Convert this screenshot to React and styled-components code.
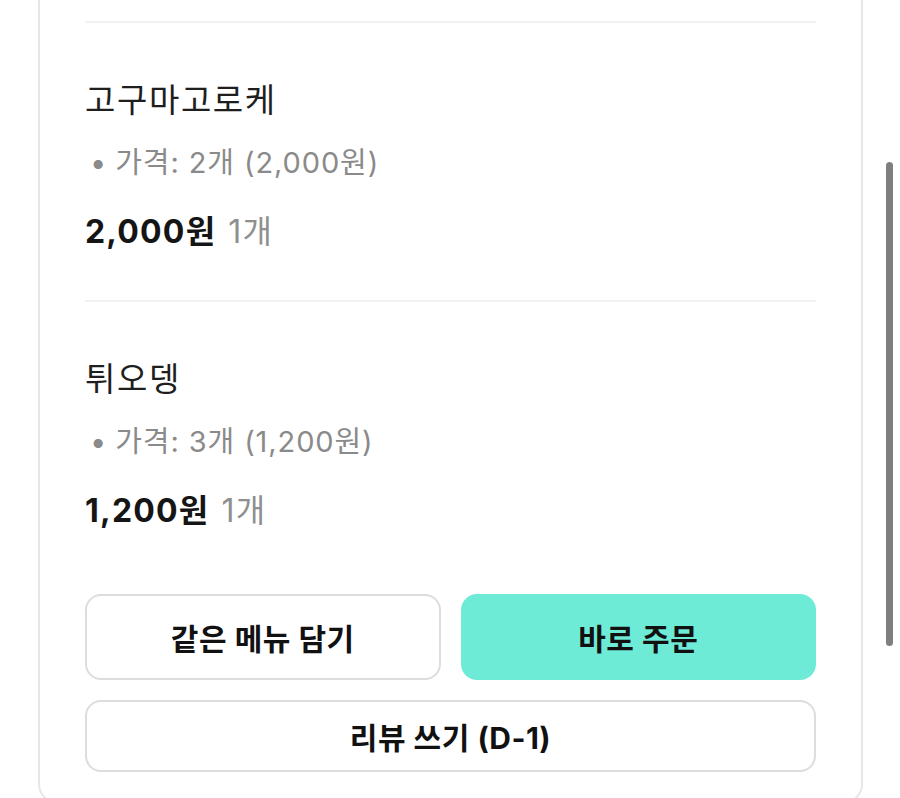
import React from "react";
import styled, { createGlobalStyle } from "styled-components";

const GlobalStyle = createGlobalStyle`
  html, body {
    margin: 0;
    padding: 0;
    height: 100%;
    overflow: hidden;
    background: #ffffff;
  }
  body {
    font-family: "Inter", "Noto Sans CJK KR", sans-serif;
    color: #1a1a1a;
  }
`;

const items = [
  { name: "고구마고로케", option: "가격: 2개 (2,000원)", total: "2,000원", count: "1개" },
  { name: "튀오뎅", option: "가격: 3개 (1,200원)", total: "1,200원", count: "1개" },
];

const App = function () {
  return (
    <>
      <GlobalStyle />
      <Page>
        <Card>
          {items.map((item) => (
            <Item key={item.name}>
              <Name>{item.name}</Name>
              <Option>{item.option}</Option>
              <Total>
                <strong>{item.total}</strong>
                <span>{item.count}</span>
              </Total>
            </Item>
          ))}
          <Actions>
            <Button>같은 메뉴 담기</Button>
            <Button $primary>바로 주문</Button>
            <Button $wide>리뷰 쓰기 (D-1)</Button>
          </Actions>
        </Card>
        <ScrollThumb />
      </Page>
    </>
  );
};

export default App;

const Page = styled.div`
  position: relative;
  height: 100vh;
  padding: 0 37px 0 38px;
`;

const Card = styled.div`
  border: 2px solid #e6e6e6;
  border-top: none;
  border-radius: 0 0 20px 20px;
  padding: 21px 45px 30px 45px;
`;

const Item = styled.div`
  border-top: 2px solid #f1f1f1;
  padding: 57px 0 49px;
  display: flex;
  flex-direction: column;
`;

const Name = styled.div`
  font-size: 33px;
  line-height: 40px;
  font-weight: 400;
  color: #1e1e1e;
  letter-spacing: 1.6px;
`;

const Option = styled.div`
  margin-top: 25px;
  padding-left: 5px;
  font-size: 29px;
  line-height: 36px;
  color: #8a8a8a;
  letter-spacing: 0.9px;

  &::before {
    content: "•";
    margin-right: 8px;
  }
`;

const Total = styled.div`
  margin-top: 32px;
  font-size: 32px;
  line-height: 38px;
  display: flex;
  align-items: baseline;
  gap: 12px;
  letter-spacing: 1.2px;

  & strong {
    font-weight: 700;
    color: #151515;
  }

  & span {
    color: #8f8f8f;
    font-weight: 400;
  }
`;

const Actions = styled.div`
  margin-top: 15px;
  display: grid;
  grid-template-columns: 1fr 1fr;
  gap: 20px;
`;

const Button = styled.button`
  grid-column: ${(p) => (p.$wide ? "1 / -1" : "auto")};
  height: ${(p) => (p.$wide ? "72px" : "86px")};
  border-radius: 16px;
  border: ${(p) => (p.$primary ? "none" : "2px solid #dddddd")};
  background: ${(p) => (p.$primary ? "#6eebd6" : "#ffffff")};
  color: #111111;
  font-family: "Inter", "Noto Sans CJK KR", sans-serif;
  font-size: 30px;
  font-weight: 700;
  letter-spacing: 0.5px;
  cursor: pointer;
`;

const ScrollThumb = styled.div`
  position: absolute;
  top: 162px;
  right: 7px;
  width: 7px;
  height: 484px;
  border-radius: 4px;
  background: #7f7f7f;
`;
